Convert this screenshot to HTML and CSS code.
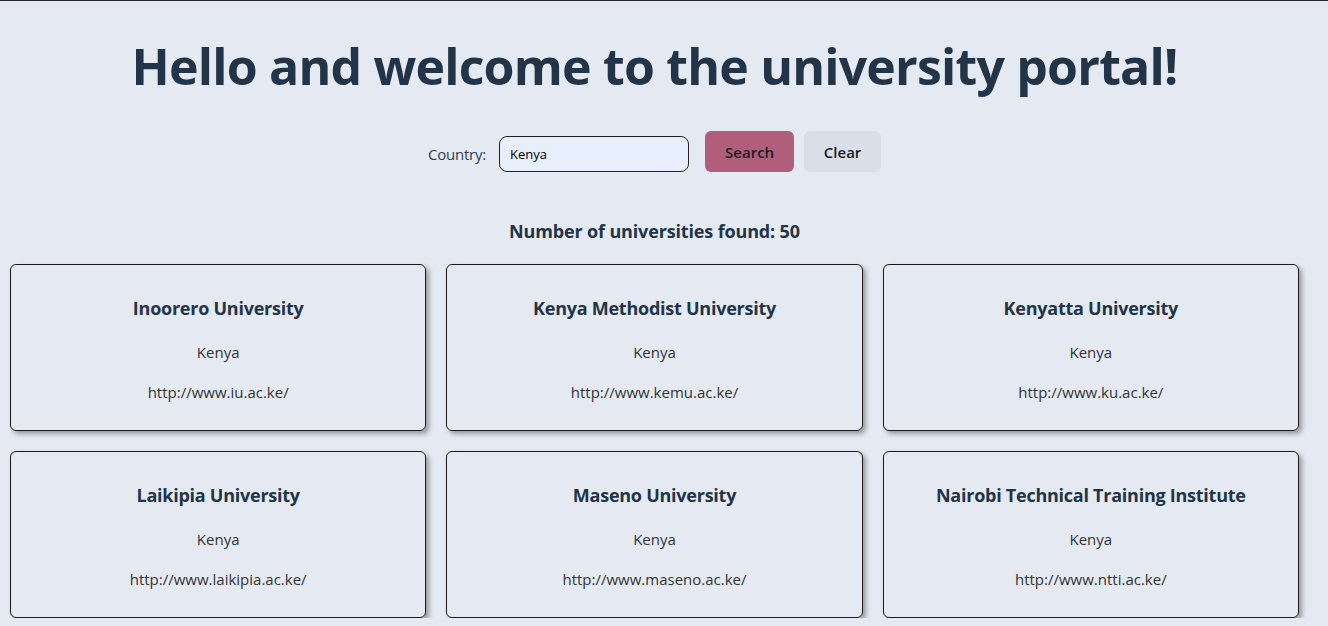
FILE: index.html
```html
<!DOCTYPE html>
<html lang="en">
<head>
<meta charset="utf-8">
<title>University portal</title>
<link rel="stylesheet" href="styles.css">
</head>
<body>
<div class="top-line"></div>
<main class="page">
  <h1 class="title">Hello and welcome to the university portal!</h1>
  <form class="search">
    <label class="search-label" for="country">Country:</label>
    <input class="search-input" id="country" type="text" value="Kenya">
    <button class="btn btn-search" type="button">Search</button>
    <button class="btn btn-clear" type="button">Clear</button>
  </form>
  <h3 class="count">Number of universities found: 50</h3>
  <section class="grid">
    <div class="card"><h3 class="card-title">Inoorero University</h3><p class="card-text">Kenya</p><p class="card-text">http://www.iu.ac.ke/</p></div>
    <div class="card"><h3 class="card-title">Kenya Methodist University</h3><p class="card-text">Kenya</p><p class="card-text">http://www.kemu.ac.ke/</p></div>
    <div class="card"><h3 class="card-title">Kenyatta University</h3><p class="card-text">Kenya</p><p class="card-text">http://www.ku.ac.ke/</p></div>
    <div class="card"><h3 class="card-title">Laikipia University</h3><p class="card-text">Kenya</p><p class="card-text">http://www.laikipia.ac.ke/</p></div>
    <div class="card"><h3 class="card-title">Maseno University</h3><p class="card-text">Kenya</p><p class="card-text">http://www.maseno.ac.ke/</p></div>
    <div class="card"><h3 class="card-title">Nairobi Technical Training Institute</h3><p class="card-text">Kenya</p><p class="card-text">http://www.ntti.ac.ke/</p></div>
  </section>
</main>
</body>
</html>
```
FILE: styles.css
```css
html { overflow: hidden; }
body {
  margin: 0;
  background: #e5eaf2;
  font-family: "Segoe UI", "Open Sans", "Noto Sans", sans-serif;
  color: #223447;
}
.top-line { height: 1px; background: #222; }
.page { width: 1309px; }
.title {
  margin: 0;
  padding-top: 33px;
  font-size: 50px;
  letter-spacing: -0.8px;
  line-height: 64px;
  font-weight: 700;
  text-align: center;
  color: #223447;
}
.search {
  margin-top: 33px;
  height: 41px;
  display: flex;
  align-items: flex-end;
  justify-content: center;
}
.search-label {
  font-size: 15px;
  letter-spacing: -0.2px;
  line-height: 36px;
  color: #2c3e50;
  margin-right: 13px;
}
.search-input {
  width: 190px;
  height: 36px;
  box-sizing: border-box;
  border: 1px solid #222;
  border-radius: 8px;
  background: #e8effc;
  padding: 0 10px;
  font-family: inherit;
  font-size: 13px;
  color: #000;
  margin-right: 16px;
}
.btn {
  height: 41px;
  border: none;
  border-radius: 6px;
  font-family: inherit;
  font-size: 15px;
  font-weight: 600;
  color: #1a1a1a;
}
.btn-search { width: 89px; background: #b05e7c; margin-right: 10px; }
.btn-clear { width: 77px; background: #d9dfe9; }
.count {
  margin: 47px 0 0;
  font-size: 18px;
  letter-spacing: -0.15px;
  line-height: 24px;
  font-weight: 700;
  text-align: center;
}
.grid {
  margin-top: 21px;
  padding: 0 10px;
  display: grid;
  grid-template-columns: repeat(3, 1fr);
  gap: 20px;
}
.card {
  height: 167px;
  box-sizing: border-box;
  border: 1px solid #1b1b1b;
  border-radius: 6px;
  box-shadow: 3px 3px 5px rgba(0, 0, 0, 0.35);
  padding-top: 30px;
  text-align: center;
}
.card-title {
  margin: 0;
  font-size: 18px;
  letter-spacing: -0.25px;
  line-height: 26px;
  font-weight: 700;
  color: #223447;
}
.card-text {
  margin: 20px 0 0;
  font-size: 15px;
  line-height: 22px;
  color: #333;
}
.card-text + .card-text { margin-top: 18px; }
```
